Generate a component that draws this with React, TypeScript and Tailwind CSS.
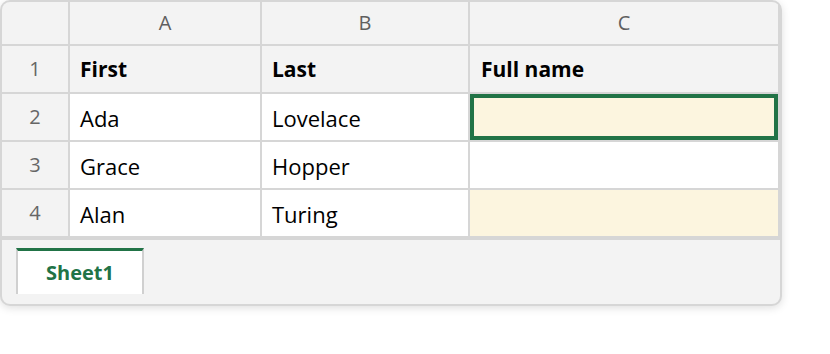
import React from 'react'

const cols = ['A', 'B', 'C']

const rows = [
  { n: 1, a: 'First', b: 'Last', c: 'Full name', head: true },
  { n: 2, a: 'Ada', b: 'Lovelace', c: '', selected: true, fill: true },
  { n: 3, a: 'Grace', b: 'Hopper', c: '' },
  { n: 4, a: 'Alan', b: 'Turing', c: '', fill: true },
]

export default function App() {
  return (
    <div className="w-[830px] h-[354px] bg-white font-['Open_Sans',sans-serif]">
      <div className="w-[782px] rounded-[10px] border-2 border-[#d6d6d6] bg-[#d6d6d6] overflow-hidden shadow-[0_2px_8px_rgba(0,0,0,0.13)]">
        {/* grid */}
        <div className="grid grid-cols-[66px_190px_206px_308px] grid-rows-[42px_46px_46px_46px_46px] gap-[2px] mb-[4px] text-[20px]">
          <div className="bg-[#f3f3f3]" />
          {cols.map(c => (
            <div key={c} className="bg-[#f3f3f3] flex items-center justify-center text-[#5f5f5f]">
              {c}
            </div>
          ))}
          {rows.map(r => {
            const cell = r.head
              ? 'bg-[#f3f3f3] font-bold text-[21px]'
              : 'bg-white text-[22px]'
            return (
              <React.Fragment key={r.n}>
                <div className="bg-[#f3f3f3] flex items-center justify-center text-[#666]">{r.n}</div>
                <div className={`${cell} flex items-center px-[10px] pt-[2px] text-black`}>{r.a}</div>
                <div className={`${cell} flex items-center px-[10px] pt-[2px] text-black`}>{r.b}</div>
                <div
                  className={`relative ${r.head ? cell : r.fill ? 'bg-[#fcf5df]' : 'bg-white'} flex items-center px-[11px] pt-[2px] text-black`}
                >
                  {r.c}
                  {r.selected && (
                    <div className="absolute inset-0 border-4 border-[#217346]" />
                  )}
                </div>
              </React.Fragment>
            )
          })}
        </div>

        {/* sheet tabs */}
        <div className="h-[64px] bg-[#f3f3f3] pt-[8px] pl-[14px]">
          <div className="w-[128px] h-[46px] bg-white border-t-[3px] border-x-2 border-t-[#217346] border-x-[#d0d0d0] flex items-center justify-center text-[20px] font-bold text-[#217346]">
            Sheet1
          </div>
        </div>
      </div>
    </div>
  )
}
